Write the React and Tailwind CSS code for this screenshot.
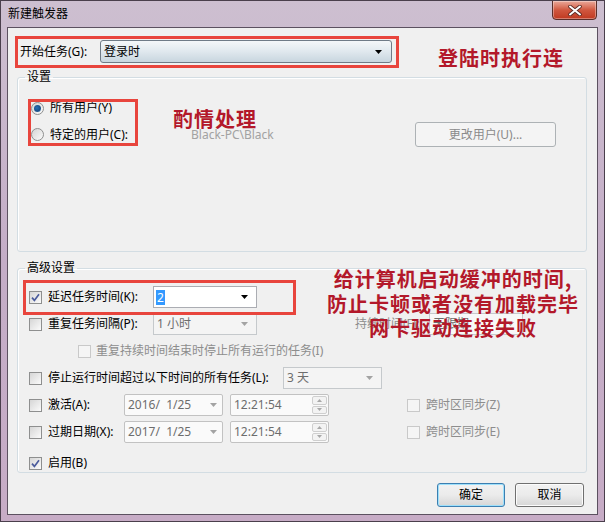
import React from 'react';

const Arrow = ({ gray }) => (
  <svg width="7" height="4" viewBox="0 0 7 4" className="shrink-0">
    <path d="M0 0h7L3.5 4z" fill={gray ? '#a3a3a3' : '#000'} />
  </svg>
);

const Check = ({ checked, disabled }) => (
  <span
    className={
      disabled
        ? 'block w-[13px] h-[13px] border border-[#c9c9c9] bg-[#f5f5f5] shrink-0'
        : 'w-[13px] h-[13px] border border-[#8e8f8f] bg-gradient-to-br from-[#d6d6d6] to-[#fbfbfb] shrink-0 flex items-center justify-center'
    }
  >
    {checked && (
      <svg width="9" height="9" viewBox="0 0 9 9">
        <path d="M1 4.6 L3.4 7.4 L8 1.2" stroke="#4a5b9c" strokeWidth="1.7" fill="none" />
      </svg>
    )}
  </span>
);

const Radio = ({ checked }) => (
  <span className="w-[13px] h-[13px] rounded-full border border-[#8e8f8f] bg-gradient-to-br from-[#d4d4d4] to-[#fbfbfb] shrink-0 flex items-center justify-center">
    {checked && (
      <span className="w-[7px] h-[7px] rounded-full bg-[radial-gradient(circle_at_40%_40%,#2a6fb5,#174e86_60%,#7fb3e2)]" />
    )}
  </span>
);

const Spinner = () => (
  <span className="ml-auto mr-[1px] w-[15px] h-[18px] flex flex-col gap-[1px]">
    <span className="flex-1 border border-[#cfcfcf] rounded-[2px] bg-[#f3f3f3] flex items-center justify-center">
      <svg width="5" height="3" viewBox="0 0 5 3"><path d="M0 3h5L2.5 0z" fill="#a8a8a8" /></svg>
    </span>
    <span className="flex-1 border border-[#cfcfcf] rounded-[2px] bg-[#f3f3f3] flex items-center justify-center">
      <svg width="5" height="3" viewBox="0 0 5 3"><path d="M0 0h5L2.5 3z" fill="#a8a8a8" /></svg>
    </span>
  </span>
);

const DateBox = ({ text }) => (
  <span className="w-[99px] h-[22px] border border-[#c2c2c2] rounded-[2px] bg-[#fafafa] flex items-center pl-[3px] pr-[5px] text-[#6d6d6d] whitespace-pre">
    <span>{text}</span>
    <span className="ml-auto"><Arrow gray /></span>
  </span>
);

const TimeBox = () => (
  <span className="w-[99px] h-[22px] border border-[#c2c2c2] rounded-[2px] bg-[#fafafa] flex items-center pl-[3px] text-[#6d6d6d]">
    <span>12:21:54</span>
    <Spinner />
  </span>
);

export default function App() {
  return (
    <div className="w-[605px] h-[522px] relative overflow-hidden border border-[#4a3f4c] bg-gradient-to-b from-[#cdbfd0] via-[#c4adc7] to-[#c7acc6] font-['Noto_Sans','Noto_Sans_CJK_SC',sans-serif] text-[12px] leading-[16px] text-black">
      {/* title bar */}
      <div className="h-[26px] flex items-start">
        <span className="pl-[7px] pt-[5px]">新建触发器</span>
        <div className="ml-auto mr-[7px] -mt-[1px] w-[45px] h-[20px] rounded-b-[4px] border border-[#5a2f2a] bg-gradient-to-b from-[#e9a89a] via-[#d0573f] to-[#c0381f] flex items-center justify-center shadow-[inset_0_0_0_1px_rgba(255,255,255,0.35)]">
          <svg width="14" height="11" viewBox="0 0 14 11">
            <path d="M2 1.5 L12 9.5 M12 1.5 L2 9.5" stroke="#5a2a24" strokeWidth="3.6" strokeLinecap="round" />
            <path d="M2 1.5 L12 9.5 M12 1.5 L2 9.5" stroke="#ffffff" strokeWidth="2" strokeLinecap="round" />
          </svg>
        </div>
      </div>

      {/* client area */}
      <div className="ml-[6px] w-[591px] h-[488px] border border-[#5c5160] bg-[#f0f0f0] flex flex-col">
        {/* start task */}
        <div className="mt-[12px] pl-[12px] h-[23px] flex items-center">
          <span className="w-[80px]">开始任务(G):</span>
          <div className="w-[292px] h-[23px] border border-[#6f7b87] rounded-[3px] bg-gradient-to-b from-[#f4f7f9] via-[#e0e8ee] to-[#c8d6df] flex items-center pl-[3px] pr-[9px]">
            <span>登录时</span>
            <span className="ml-auto"><Arrow /></span>
          </div>
        </div>

        {/* settings group */}
        <fieldset className="mt-[6px] ml-[9px] w-[570px] h-[183px] border border-[#d3dde3] rounded-[3px] shadow-[inset_1px_1px_0_#ffffff]">
          <legend className="ml-[7px] px-[2px] leading-[16px]">设置</legend>
          <div className="flex flex-col pl-[13px]">
            <div className="mt-[13px] h-[20px] flex items-center gap-[6px]">
              <Radio checked />
              <span>所有用户(Y)</span>
            </div>
            <div className="mt-[4px] h-[25px] flex items-center">
              <Radio />
              <span className="ml-[6px] w-[141px]">特定的用户(C):</span>
              <span className="w-[224px] text-[#a2a2a2]">Black-PC\Black</span>
              <span className="w-[141px] h-[25px] border border-[#adb2b5] rounded-[3px] bg-[#f4f4f4] flex items-center justify-center text-[#8a8a8a]">
                更改用户(U)...
              </span>
            </div>
          </div>
        </fieldset>

        {/* advanced group */}
        <fieldset className="mt-[8px] ml-[9px] w-[570px] h-[213px] border border-[#d3dde3] rounded-[3px] shadow-[inset_1px_1px_0_#ffffff]">
          <legend className="ml-[7px] px-[2px] leading-[16px]">高级设置</legend>
          <div className="flex flex-col pl-[11px]">
            <div className="mt-[10px] h-[22px] flex items-center">
              <Check checked />
              <span className="ml-[6px] w-[105px]">延迟任务时间(K):</span>
              <span className="w-[104px] h-[22px] border border-[#abadb3] bg-white flex items-center pl-[2px] pr-[8px]">
                <span className="bg-[#3399ff] text-white px-[1px] leading-[15px]">2</span>
                <span className="ml-auto"><Arrow /></span>
              </span>
            </div>
            <div className="mt-[5px] h-[22px] flex items-center">
              <Check />
              <span className="ml-[6px] w-[105px]">重复任务间隔(P):</span>
              <span className="w-[104px] h-[22px] border border-[#c5c9cc] bg-[#f4f4f4] flex items-center pl-[3px] pr-[8px] text-[#6d6d6d]">
                <span>1 小时</span>
                <span className="ml-auto"><Arrow gray /></span>
              </span>
              <span className="ml-[98px] w-[74px] text-[#8d8d8d]">持续时间(F):</span>
              <span className="w-[94px] h-[22px] border border-[#c5c9cc] bg-[#f8f8f8] flex items-center pl-[3px] pr-[8px] text-[#6d6d6d]">
                <span>无限期</span>
                <span className="ml-auto"><Arrow gray /></span>
              </span>
            </div>
            <div className="mt-[5px] h-[22px] flex items-center pl-[49px]">
              <Check disabled />
              <span className="ml-[5px] text-[#8d8d8d]">重复持续时间结束时停止所有运行的任务(I)</span>
            </div>
            <div className="mt-[5px] h-[22px] flex items-center">
              <Check />
              <span className="ml-[6px] w-[235px]">停止运行时间超过以下时间的所有任务(L):</span>
              <span className="w-[99px] h-[22px] border border-[#c5c9cc] bg-[#f4f4f4] flex items-center pl-[3px] pr-[8px] text-[#6d6d6d]">
                <span>3 天</span>
                <span className="ml-auto"><Arrow gray /></span>
              </span>
            </div>
            <div className="mt-[5px] h-[22px] flex items-center">
              <Check />
              <span className="ml-[6px] w-[76px]">激活(A):</span>
              <DateBox text="2016/  1/25" />
              <span className="ml-[7px]"><TimeBox /></span>
              <span className="ml-[78px]"><Check disabled /></span>
              <span className="ml-[6px] text-[#8d8d8d]">跨时区同步(Z)</span>
            </div>
            <div className="mt-[5px] h-[22px] flex items-center">
              <Check />
              <span className="ml-[6px] w-[76px]">过期日期(X):</span>
              <DateBox text="2017/  1/25" />
              <span className="ml-[7px]"><TimeBox /></span>
              <span className="ml-[78px]"><Check disabled /></span>
              <span className="ml-[6px] text-[#8d8d8d]">跨时区同步(E)</span>
            </div>
            <div className="mt-[9px] h-[22px] flex items-center">
              <Check checked />
              <span className="ml-[6px]">启用(B)</span>
            </div>
          </div>
        </fieldset>

        {/* buttons */}
        <div className="mt-[10px] flex justify-end pr-[13px] gap-[10px]">
          <span className="w-[68px] h-[24px] border border-[#3c7fb1] rounded-[3px] bg-gradient-to-b from-[#f2f2f2] via-[#ebebeb] to-[#d6d6d6] shadow-[inset_0_0_0_1px_#9ee0fb] flex items-center justify-center">
            确定
          </span>
          <span className="w-[69px] h-[24px] border border-[#707070] rounded-[3px] bg-gradient-to-b from-[#f2f2f2] via-[#ebebeb] to-[#d6d6d6] shadow-[inset_0_0_0_1px_#fcfcfc] flex items-center justify-center">
            取消
          </span>
        </div>
      </div>

      {/* annotations overlay */}
      <div className="absolute left-[14px] top-[35px] w-[384px] h-[32px] border-[3px] border-[#e8453d]" />
      <div className="absolute left-[437px] top-[47px] text-[20px] leading-[20px] font-bold tracking-[1px] text-[#b3182a] font-['Noto_Sans_CJK_SC',sans-serif]">
        登陆时执行连
      </div>
      <div className="absolute left-[27px] top-[98px] w-[110px] h-[47px] border-[3px] border-[#e8453d]" />
      <div className="absolute left-[172px] top-[108px] text-[20px] leading-[20px] font-bold tracking-[1px] text-[#b3182a] font-['Noto_Sans_CJK_SC',sans-serif]">
        酌情处理
      </div>
      <div className="absolute left-[22px] top-[279px] w-[273px] h-[35px] border-[3px] border-[#e8453d]" />
      <div className="absolute left-[317px] top-[266px] w-[270px] text-center text-[20px] leading-[24.5px] font-bold tracking-[1px] text-[#b3182a] font-['Noto_Sans_CJK_SC',sans-serif]">
        <div>给计算机启动缓冲的时间,</div>
        <div>防止卡顿或者没有加载完毕</div>
        <div>网卡驱动连接失败</div>
      </div>
    </div>
  );
}
